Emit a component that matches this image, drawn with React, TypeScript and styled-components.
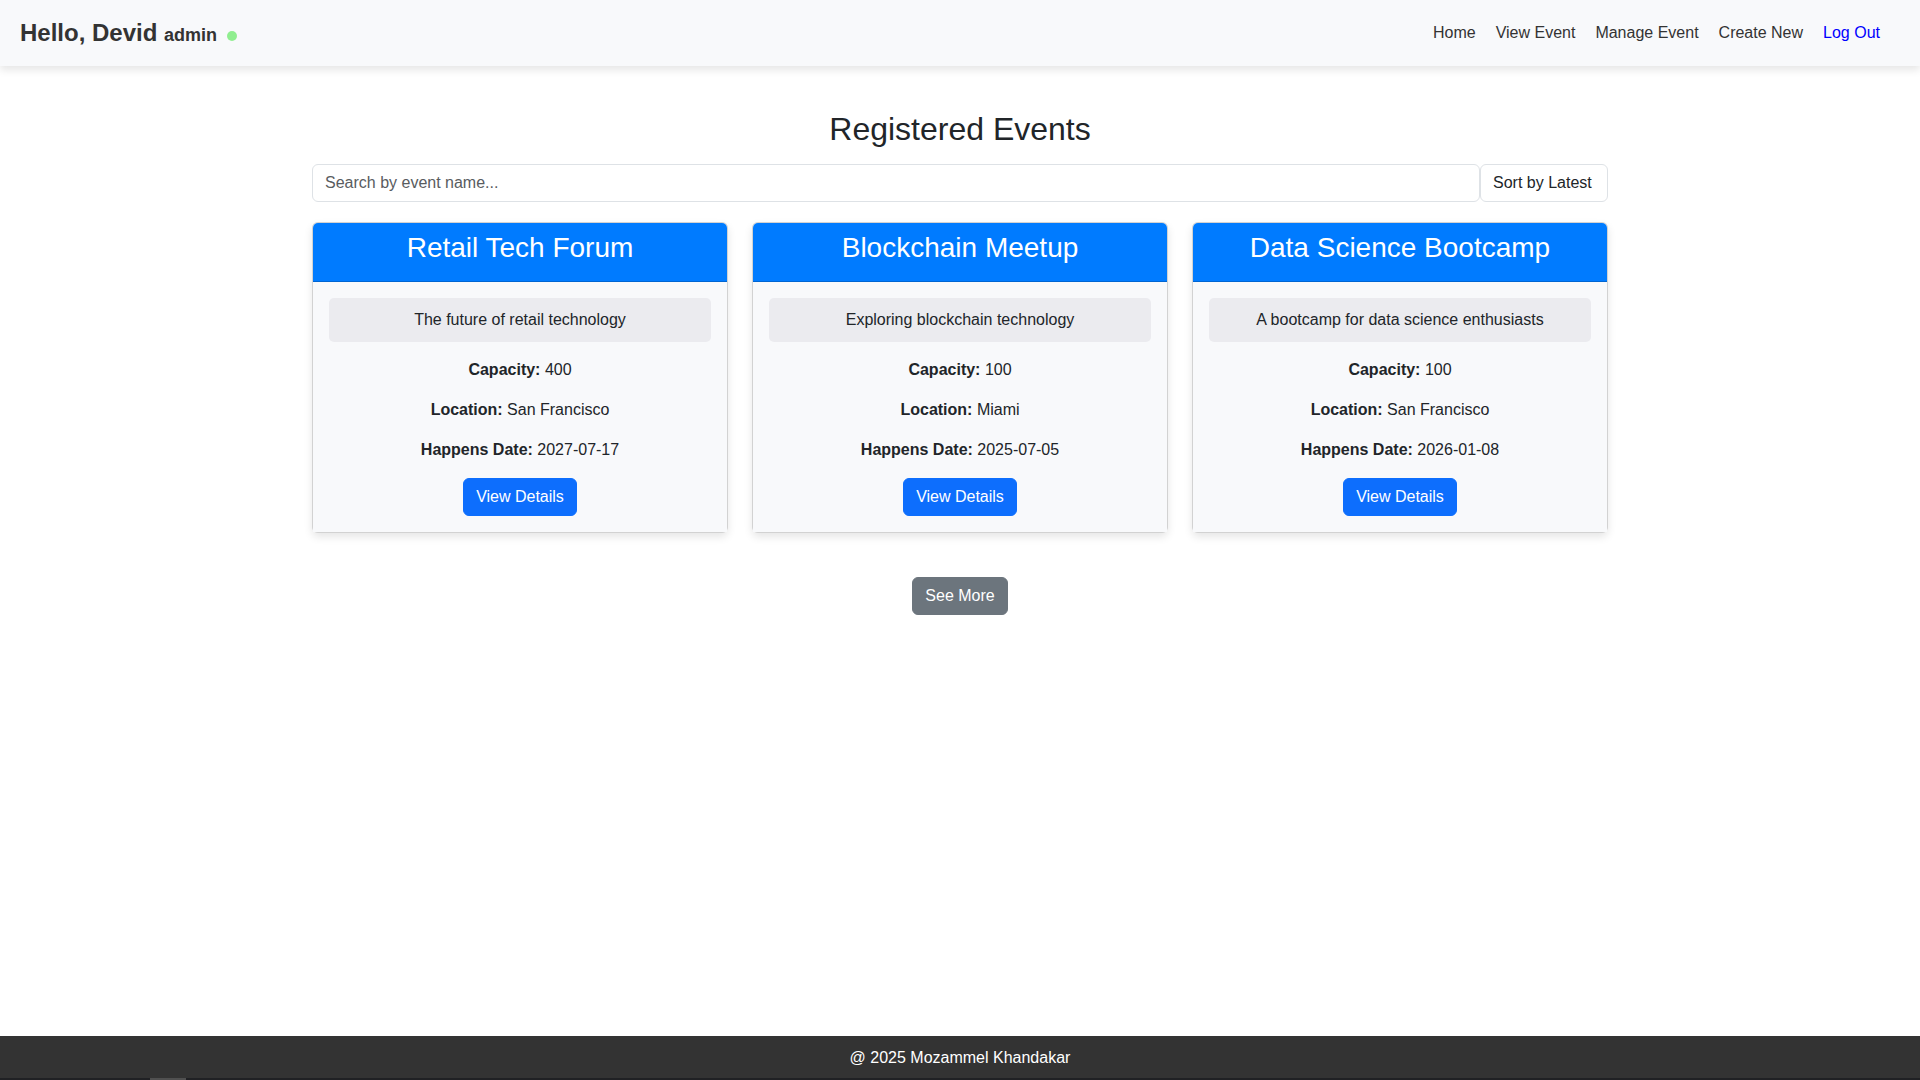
import React, { useState } from "react";
import styled, { createGlobalStyle } from "styled-components";

const GlobalStyle = createGlobalStyle`
  *, *::before, *::after { box-sizing: border-box; }
  body {
    margin: 0;
    background: #fff;
    color: #212529;
    font-family: Arial, "Liberation Sans", sans-serif;
    font-size: 16px;
    line-height: 24px;
  }
`;

const Page = styled.div`
  display: flex;
  flex-direction: column;
  min-height: 100vh;
`;

const Header = styled.header`
  display: flex;
  align-items: center;
  justify-content: space-between;
  padding: 15px 20px;
  background: #f8f9fb;
  box-shadow: 0 4px 8px rgba(0, 0, 0, 0.1);
`;

const Greeting = styled.div`
  color: #333;
  font-size: 24px;
  font-weight: 700;
  line-height: 36px;
`;

const Role = styled.span`
  font-size: 18px;
  line-height: 24px;
`;

const OnlineDot = styled.span`
  display: inline-block;
  width: 10px;
  height: 10px;
  margin-left: 5px;
  border-radius: 50%;
  background: #90ee90;
`;

const Nav = styled.nav`
  display: flex;
  gap: 20px;
  padding-right: 20px;
`;

const NavLink = styled.a<{ $accent?: boolean }>`
  color: ${(p) => (p.$accent ? "#00f" : "#333")};
  text-decoration: none;
`;

const Main = styled.main`
  flex: 1;
  width: 100%;
  max-width: 1320px;
  margin: 0 auto;
  padding: 44px 12px;
  text-align: center;
`;

const Title = styled.h1`
  margin: 0 0 16px;
  font-size: 32px;
  font-weight: 400;
  line-height: 38px;
`;

const Filters = styled.form`
  display: flex;
  margin-bottom: 20px;
`;

const fieldStyle = `
  height: 38px;
  padding: 6px 12px;
  border: 1px solid #dee2e6;
  border-radius: 6px;
  background: #fff;
  color: #212529;
  font: inherit;
  appearance: none;
`;

const SearchInput = styled.input`
  ${fieldStyle}
  flex: 1;
  min-width: 0;
  &::placeholder { color: #595c5f; opacity: 1; }
`;

const SortSelect = styled.select`
  ${fieldStyle}
`;

const CardGrid = styled.section`
  display: grid;
  grid-template-columns: repeat(auto-fit, minmax(320px, 1fr));
  gap: 24px;
`;

const Card = styled.article`
  border: 1px solid rgba(0, 0, 0, 0.175);
  border-radius: 6px;
  background: #fff;
  box-shadow: 0 4px 8px rgba(0, 0, 0, 0.1);
`;

const CardHeader = styled.header`
  padding: 8px 16px 16px;
  border-bottom: 1px solid rgba(0, 0, 0, 0.175);
  border-radius: 5px 5px 0 0;
  background: #007bff;
  color: #fff;
`;

const CardTitle = styled.h2`
  margin: 0;
  font-size: 28px;
  font-weight: 400;
  line-height: 34px;
`;

const CardBody = styled.div`
  padding: 16px;
  background: #f8f9fb;
`;

const Description = styled.p`
  margin: 0 0 16px;
  padding: 10px;
  border-radius: 5px;
  background: #ebebef;
`;

const Fact = styled.p`
  margin: 0 0 16px;
`;

const Button = styled.button<{ $secondary?: boolean }>`
  padding: 6px 12px;
  border: 1px solid ${(p) => (p.$secondary ? "#6c757d" : "#0d6efd")};
  border-radius: 6px;
  background: ${(p) => (p.$secondary ? "#6c757d" : "#0d6efd")};
  color: #fff;
  font: inherit;
  cursor: pointer;
`;

const More = styled.div`
  margin-top: 44px;
`;

const Footer = styled.footer`
  padding: 10px 0 8px;
  background: #333;
  color: #fff;
  text-align: center;
`;

const BottomStrip = styled.div`
  height: 2px;
  padding-left: 150px;
  background: #202124;
`;

const StripMarker = styled.div`
  width: 36px;
  height: 2px;
  background: #505050;
`;

const links = ["Home", "View Event", "Manage Event", "Create New"];

const events = [
  { name: "Retail Tech Forum", description: "The future of retail technology", capacity: 400, location: "San Francisco", date: "2027-07-17" },
  { name: "Blockchain Meetup", description: "Exploring blockchain technology", capacity: 100, location: "Miami", date: "2025-07-05" },
  { name: "Data Science Bootcamp", description: "A bootcamp for data science enthusiasts", capacity: 100, location: "San Francisco", date: "2026-01-08" },
];

export default function App() {
  const [query, setQuery] = useState("");
  const shown = events.filter((e) => e.name.toLowerCase().includes(query.toLowerCase()));

  return (
    <>
      <GlobalStyle />
      <Page>
        <Header>
          <Greeting>
            Hello, Devid <Role>admin <OnlineDot /></Role>
          </Greeting>
          <Nav>
            {links.map((label) => (
              <NavLink key={label} href="#">{label}</NavLink>
            ))}
            <NavLink href="#" $accent>Log Out</NavLink>
          </Nav>
        </Header>
        <Main>
          <Title>Registered Events</Title>
          <Filters onSubmit={(e) => e.preventDefault()}>
            <SearchInput
              type="text"
              aria-label="Search by event name"
              placeholder="Search by event name..."
              value={query}
              onChange={(e) => setQuery(e.target.value)}
            />
            <SortSelect aria-label="Sort order" defaultValue="latest">
              <option value="latest">Sort by Latest</option>
              <option value="oldest">Sort by Oldest</option>
            </SortSelect>
          </Filters>
          <CardGrid>
            {shown.map((event) => (
              <Card key={event.name}>
                <CardHeader>
                  <CardTitle>{event.name}</CardTitle>
                </CardHeader>
                <CardBody>
                  <Description>{event.description}</Description>
                  <Fact><strong>Capacity:</strong> {event.capacity}</Fact>
                  <Fact><strong>Location:</strong> {event.location}</Fact>
                  <Fact><strong>Happens Date:</strong> {event.date}</Fact>
                  <Button type="button">View Details</Button>
                </CardBody>
              </Card>
            ))}
          </CardGrid>
          <More>
            <Button type="button" $secondary>See More</Button>
          </More>
        </Main>
        <Footer>@ 2025 Mozammel Khandakar</Footer>
        <BottomStrip>
          <StripMarker />
        </BottomStrip>
      </Page>
    </>
  );
}
